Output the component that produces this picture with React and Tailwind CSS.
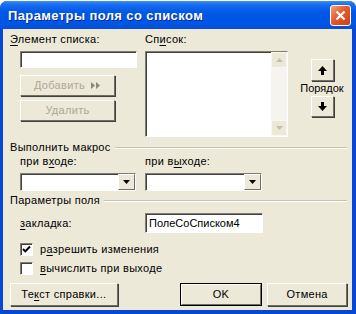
import React from 'react';

const sunken = 'border-t border-l border-t-[#7f7d70] border-l-[#7f7d70] border-b border-r border-b-white border-r-white shadow-[inset_1px_1px_0_#404040]';
const raised = 'border border-t-white border-l-white border-r-[#716f64] border-b-[#716f64] shadow-[1px_1px_0_#404040] bg-[#ece9d8]';

function U({ children }) {
    return <span className="underline underline-offset-2">{children}</span>;
}

function Arrow({ dir = 'down', color = '#000' }) {
    return (
        <svg width="7" height="4" viewBox="0 0 7 4">
            {dir === 'down'
                ? <path d="M0 0h7L3.5 4z" fill={color} />
                : <path d="M0 4h7L3.5 0z" fill={color} />}
        </svg>
    );
}

function OrderArrow({ up }) {
    return (
        <svg width="9" height="9" viewBox="0 0 9 9" className={up ? '' : 'rotate-180'}>
            <path d="M4.5 0L9 5H6v4H3V5H0z" fill="#000" />
        </svg>
    );
}

function Combo({ w }) {
    return (
        <div className={`${sunken} ${w} h-[18px] bg-white flex justify-end`}>
            <div className={`${raised} shadow-none w-[17px] h-full flex items-center justify-center`}>
                <Arrow />
            </div>
        </div>
    );
}

function GroupHeader({ children }) {
    return (
        <div className="flex items-center h-[13px]">
            <span>{children}</span>
            <div className="flex-1 ml-[4px] border-t border-t-[#c5c2b2] border-b border-b-white" />
        </div>
    );
}

function Check({ checked }) {
    return (
        <div className={`${sunken} w-[13px] h-[13px] bg-white flex items-center justify-center`}>
            {checked && (
                <svg width="9" height="9" viewBox="0 0 9 9">
                    <path d="M1 4l2.3 2.4L8 1.5" stroke="#000" strokeWidth="2" fill="none" />
                </svg>
            )}
        </div>
    );
}

export default function App() {
    return (
        <div className="w-[356px] h-[314px] bg-white pt-[1px] text-[11px] leading-[13px] tracking-[0.3px] text-black" style={{ fontFamily: '"Liberation Sans", Arial, sans-serif' }}>
            <div className="h-[313px] flex flex-col rounded-t-[7px] overflow-hidden bg-[#0846d8]">
                {/* Title bar */}
                <div className="h-[28px] flex items-center justify-between pl-[8px] pr-[5px] bg-[linear-gradient(180deg,#3d8ff7_0%,#1a6ef0_12%,#0058e6_40%,#0055e5_85%,#0a4dd4_100%)]">
                    <span className="text-white font-bold text-[13px] tracking-[0.4px] [text-shadow:1px_1px_0_#0a2a8a]">Параметры поля со списком</span>
                    <div className="w-[21px] h-[21px] rounded-[3px] border border-white bg-[linear-gradient(135deg,#f4a07c,#e55a2c_45%,#cc3f16)] flex items-center justify-center">
                        <svg width="11" height="11" viewBox="0 0 11 11">
                            <path d="M1.5 1.5l8 8M9.5 1.5l-8 8" stroke="#fff" strokeWidth="2.2" />
                        </svg>
                    </div>
                </div>

                {/* Body */}
                <div className="flex-1 ml-[3px] mr-[4px] mb-[4px] bg-[#ece9d8] flex flex-col pl-[7px] pr-[5px] pt-[4px]">
                    <div className="flex">
                        <div className="w-[127px] flex flex-col">
                            <div className="h-[13px]"><U>Э</U>лемент списка:</div>
                            <div className={`${sunken} ml-[10px] mt-[5px] w-[117px] h-[17px] bg-white`} />
                            <div className={`${raised} ml-[10px] mt-[7px] w-[95px] h-[21px] flex items-center justify-center gap-[6px] text-[#aca899]`}>
                                <span>Добавить</span>
                                <svg width="10" height="7" viewBox="0 0 10 7">
                                    <path d="M0 0l4 3.5L0 7zM5 0l4 3.5L5 7z" fill="#8d8a7c" />
                                </svg>
                            </div>
                            <div className={`${raised} ml-[10px] mt-[4px] w-[95px] h-[21px] flex items-center justify-center text-[#aca899]`}>
                                Удалить
                            </div>
                        </div>
                        <div className="ml-[8px] flex flex-col">
                            <div className="h-[13px]">Сп<U>и</U>сок:</div>
                            <div className={`${sunken} mt-[5px] w-[143px] h-[86px] bg-white flex justify-end`}>
                                <div className="w-[16px] h-full bg-[#f5f4ee] flex flex-col justify-between">
                                    <div className="h-[16px] bg-[#ece9d8] border border-[#f8f7f2] flex items-center justify-center">
                                        <Arrow dir="up" color="#c3c0b2" />
                                    </div>
                                    <div className="h-[16px] bg-[#ece9d8] border border-[#f8f7f2] flex items-center justify-center">
                                        <Arrow color="#c3c0b2" />
                                    </div>
                                </div>
                            </div>
                        </div>
                        <div className="ml-[10px] w-[48px] flex flex-col items-center">
                            <div className={`${raised} mt-[26px] w-[23px] h-[22px] flex items-center justify-center`}>
                                <OrderArrow up />
                            </div>
                            <div className="h-[14px] flex items-center tracking-normal">Порядок</div>
                            <div className={`${raised} mt-[1px] w-[23px] h-[21px] flex items-center justify-center`}>
                                <OrderArrow />
                            </div>
                        </div>
                    </div>

                    <div className="mt-[4px]">
                        <GroupHeader>Выполнить макрос</GroupHeader>
                    </div>
                    <div className="flex pl-[10px] mt-[1px]">
                        <div className="flex flex-col w-[116px]">
                            <div className="h-[13px]">при в<U>х</U>оде:</div>
                            <div className="mt-[5px]"><Combo w="w-[116px]" /></div>
                        </div>
                        <div className="flex flex-col ml-[9px]">
                            <div className="h-[13px]">при в<U>ы</U>ходе:</div>
                            <div className="mt-[5px]"><Combo w="w-[117px]" /></div>
                        </div>
                    </div>

                    <div className="mt-[3px]">
                        <GroupHeader>Параметры поля</GroupHeader>
                    </div>
                    <div className="flex items-center pl-[10px] mt-[6px]">
                        <div className="w-[125px]"><U>з</U>акладка:</div>
                        <div className={`${sunken} w-[118px] h-[20px] bg-white flex items-center pl-[3px] tracking-normal`}>ПолеСоСписком4</div>
                    </div>
                    <div className="flex items-center gap-[7px] pl-[10px] mt-[10px]">
                        <Check checked />
                        <span>р<U>а</U>зрешить изменения</span>
                    </div>
                    <div className="flex items-center gap-[7px] pl-[10px] mt-[6px]">
                        <Check />
                        <span><U>в</U>ычислить при выходе</span>
                    </div>

                    <div className="flex mt-[8px]">
                        <div className={`${raised} w-[108px] h-[23px] flex items-center justify-center`}>Те<U>к</U>ст справки...</div>
                        <div className="ml-[62px] w-[83px] h-[23px] border border-black">
                            <div className={`${raised} shadow-none h-full flex items-center justify-center`}>OK</div>
                        </div>
                        <div className={`${raised} ml-[5px] w-[80px] h-[23px] flex items-center justify-center`}>Отмена</div>
                    </div>
                </div>
            </div>
        </div>
    );
}
